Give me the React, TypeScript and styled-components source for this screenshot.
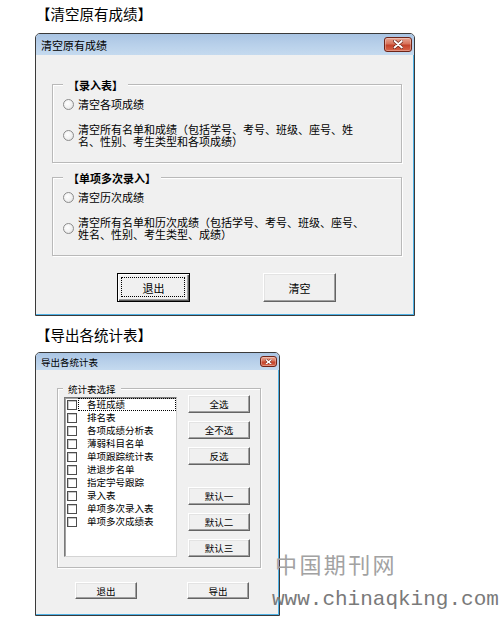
import React from "react";
import styled, { createGlobalStyle, css } from "styled-components";

const Global = createGlobalStyle`
  html, body { margin: 0; padding: 0; background: #fff; }
  body { font-family: "Noto Sans CJK SC", "Liberation Sans", sans-serif; color: #000; }
  * { box-sizing: border-box; }
`;

const Page = styled.div`
  position: relative;
  width: 502px;
  height: 622px;
  overflow: hidden;
  background: #fff;
`;

const Caption = styled.div<{ $top: number; $bottom: number }>`
  padding: ${(p) => p.$top}px 0 0 36px;
  margin-bottom: ${(p) => p.$bottom}px;
  height: ${(p) => p.$top + 28}px;
  line-height: 28px;
  font-size: 14.5px;
  white-space: nowrap;
`;

const Window = styled.div<{ $w: number }>`
  margin-left: 35px;
  width: ${(p) => p.$w}px;
  border: 1px solid #3a3a3a;
  border-radius: 5px 5px 0 0;
  background: #f0f0f0;
  overflow: hidden;
`;

const TitleBar = styled.div<{ $h: number; $size: number }>`
  height: ${(p) => p.$h}px;
  display: flex;
  align-items: center;
  justify-content: space-between;
  padding: 0 2px 0 5px;
  background: linear-gradient(to bottom, #a9c4e3 0%, #b8d0ea 50%, #c5daef 100%);
  font-size: ${(p) => p.$size}px;
  white-space: nowrap;
`;

const CloseBtn = styled.div<{ $w: number; $h: number }>`
  width: ${(p) => p.$w}px;
  height: ${(p) => p.$h}px;
  border: 1px solid #6e2418;
  border-radius: 3px;
  background: linear-gradient(to bottom, #e8a593 0%, #d7735b 45%, #c4432b 55%, #d8674c 100%);
  box-shadow: inset 0 0 0 1px rgba(255, 255, 255, 0.3);
  display: flex;
  align-items: center;
  justify-content: center;
`;

const Body = styled.div<{ $pad: string }>`
  padding: ${(p) => p.$pad};
  border-right: 1px solid #4fb1e5;
  border-bottom: 1px solid #4fb1e5;
`;

const Group = styled.div<{ $mt?: number }>`
  margin-top: ${(p) => p.$mt ?? 0}px;
  border: 1px solid #b9b9b9;
  box-shadow: inset 1px 1px 0 #fff, 1px 1px 0 #fff;
`;

const Legend = styled.div<{ $size: number; $lh: number; $ml: number; $bold?: boolean }>`
  width: fit-content;
  margin: -${(p) => p.$lh / 2}px 0 0 ${(p) => p.$ml}px;
  padding: 0 5px;
  line-height: ${(p) => p.$lh}px;
  font-size: ${(p) => p.$size}px;
  font-weight: ${(p) => (p.$bold ? 700 : 400)};
  background: #f0f0f0;
  white-space: nowrap;
`;

const Options = styled.div`
  display: flex;
  flex-direction: column;
  gap: 12px;
  padding: 5px 0 15px 10px;
`;

const RadioRow = styled.div`
  display: flex;
  align-items: center;
  gap: 4px;
  font-size: 11px;
  line-height: 12px;
  min-height: 14px;
  white-space: nowrap;
`;

const RadioCircle = styled.span`
  flex: none;
  width: 11px;
  height: 11px;
  border-radius: 50%;
  border: 1px solid #8c8c8c;
  background: radial-gradient(circle at 40% 40%, #ffffff 0%, #f2f2f2 50%, #d6d6d6 100%);
`;

const Button = styled.div<{ $w: number; $h: number; $size: number; $default?: boolean }>`
  position: relative;
  width: ${(p) => p.$w}px;
  height: ${(p) => p.$h}px;
  display: flex;
  align-items: center;
  justify-content: center;
  font-size: ${(p) => p.$size}px;
  background: #f0f0f0;
  white-space: nowrap;
  ${(p) =>
    p.$default
      ? css`
          border: 1px solid #000;
          box-shadow: inset 1px 1px 0 #fff, inset -1px -1px 0 #5a5a5a, inset -2px -2px 0 #a0a0a0;
          &::after {
            content: "";
            position: absolute;
            inset: 3px 4px 4px 3px;
            border: 1px dotted #000;
          }
        `
      : css`
          border: 1px solid;
          border-color: #fff #646464 #646464 #fff;
          box-shadow: inset -1px -1px 0 #a0a0a0, inset 1px 1px 0 #e3e3e3;
        `}
`;

const ButtonRow = styled.div<{ $mt: number; $pl: number; $gap: number }>`
  display: flex;
  margin-top: ${(p) => p.$mt}px;
  padding-left: ${(p) => p.$pl}px;
  gap: ${(p) => p.$gap}px;
`;

const GroupContent = styled.div`
  display: flex;
  gap: 11px;
  padding: 0 9px 10px 6px;
`;

const ListBox = styled.div`
  margin-top: 2px;
  width: 113px;
  height: 160px;
  background: #fff;
  border: 1px solid;
  border-color: #7a7a7a #d4d4d4 #d4d4d4 #7a7a7a;
  box-shadow: inset 1px 1px 0 #a0a0a0;
`;

const ListItem = styled.div`
  display: flex;
  align-items: center;
  height: 13px;
  padding-left: 2px;
  font-size: 9.5px;
  white-space: nowrap;
`;

const CheckBox = styled.span`
  flex: none;
  width: 10px;
  height: 10px;
  border: 1px solid #4d4d4d;
  box-shadow: inset 1px 1px 0 #c8c8c8;
  background: #fff;
`;

const ItemLabel = styled.span<{ $focus?: boolean }>`
  flex: 1;
  margin-left: 1px;
  padding-left: 8px;
  line-height: 11px;
  border: 1px dotted ${(p) => (p.$focus ? "#000" : "transparent")};
`;

const ButtonColumn = styled.div`
  display: flex;
  flex-direction: column;
  gap: 8px;
`;

const Spacer = styled.div`
  height: 6px;
`;

const WatermarkCn = styled.div`
  position: absolute;
  left: 275px;
  top: 549px;
  line-height: 28px;
  font-size: 22px;
  letter-spacing: 2.4px;
  color: #a2a2a2;
  white-space: nowrap;
`;

const WatermarkUrl = styled.div`
  position: absolute;
  left: 272px;
  top: 589px;
  line-height: 22px;
  font-family: "Liberation Mono", monospace;
  font-size: 21px;
  color: #7a7a7a;
  white-space: nowrap;
`;

const CloseX = ({ s }: { s: number }) => (
  <svg width={8 * s} height={6.5 * s} viewBox="0 0 8 6.5">
    <path d="M1.2 0.8 L6.8 5.7 M6.8 0.8 L1.2 5.7" stroke="#6a2014" strokeWidth="2.6" strokeLinecap="round" />
    <path d="M1.2 0.8 L6.8 5.7 M6.8 0.8 L1.2 5.7" stroke="#fff" strokeWidth="1.5" strokeLinecap="round" />
  </svg>
);

const items = [
  "各班成绩",
  "排名表",
  "各项成绩分析表",
  "薄弱科目名单",
  "单项跟踪统计表",
  "进退步名单",
  "指定学号跟踪",
  "录入表",
  "单项多次录入表",
  "单项多次成绩表",
];

export default function App() {
  return (
    <Page>
      <Global />
      <Caption $top={0} $bottom={5}>【清空原有成绩】</Caption>
      <Window $w={380}>
        <TitleBar $h={21} $size={11}>
          <span>清空原有成绩</span>
          <CloseBtn $w={28} $h={15}>
            <CloseX s={1.3} />
          </CloseBtn>
        </TitleBar>
        <Body $pad="29px 11px 12px 16px">
          <Group>
            <Legend $size={11} $lh={14} $ml={10} $bold>【录入表】</Legend>
            <Options>
              <RadioRow>
                <RadioCircle />
                <span>清空各项成绩</span>
              </RadioRow>
              <RadioRow>
                <RadioCircle />
                <span>
                  清空所有名单和成绩（包括学号、考号、班级、座号、姓
                  <br />
                  名、性别、考生类型和各项成绩）
                </span>
              </RadioRow>
            </Options>
          </Group>
          <Group $mt={14}>
            <Legend $size={11} $lh={14} $ml={10} $bold>【单项多次录入】</Legend>
            <Options>
              <RadioRow>
                <RadioCircle />
                <span>清空历次成绩</span>
              </RadioRow>
              <RadioRow>
                <RadioCircle />
                <span>
                  清空所有名单和历次成绩（包括学号、考号、班级、座号、
                  <br />
                  姓名、性别、考生类型、成绩）
                </span>
              </RadioRow>
            </Options>
          </Group>
          <ButtonRow $mt={17} $pl={65} $gap={73}>
            <Button $w={73} $h={29} $size={11} $default>退出</Button>
            <Button $w={73} $h={29} $size={11}>清空</Button>
          </ButtonRow>
        </Body>
      </Window>

      <Caption $top={5} $bottom={3}>【导出各统计表】</Caption>
      <Window $w={245}>
        <TitleBar $h={17} $size={9.5}>
          <span>导出各统计表</span>
          <CloseBtn $w={17} $h={11}>
            <CloseX s={0.9} />
          </CloseBtn>
        </TitleBar>
        <Body $pad="18px 17px 15px 21px">
          <Group>
            <Legend $size={9.5} $lh={12} $ml={5}>统计表选择</Legend>
            <GroupContent>
              <ListBox>
                {items.map((t, i) => (
                  <ListItem key={t}>
                    <CheckBox />
                    <ItemLabel $focus={i === 0}>{t}</ItemLabel>
                  </ListItem>
                ))}
              </ListBox>
              <ButtonColumn>
                <Button $w={62} $h={18} $size={9.5}>全选</Button>
                <Button $w={62} $h={18} $size={9.5}>全不选</Button>
                <Button $w={62} $h={18} $size={9.5}>反选</Button>
                <Spacer />
                <Button $w={62} $h={18} $size={9.5}>默认一</Button>
                <Button $w={62} $h={18} $size={9.5}>默认二</Button>
                <Button $w={62} $h={18} $size={9.5}>默认三</Button>
              </ButtonColumn>
            </GroupContent>
          </Group>
          <ButtonRow $mt={14} $pl={18} $gap={50}>
            <Button $w={62} $h={17} $size={9.5}>退出</Button>
            <Button $w={62} $h={17} $size={9.5}>导出</Button>
          </ButtonRow>
        </Body>
      </Window>

      <WatermarkCn>中国期刊网</WatermarkCn>
      <WatermarkUrl>www.chinaqking.com</WatermarkUrl>
    </Page>
  );
}
